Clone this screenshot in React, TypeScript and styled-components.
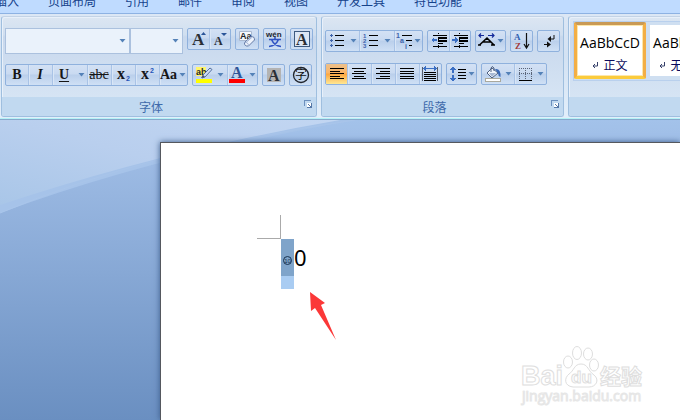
import React from "react";
import styled, { createGlobalStyle, css } from "styled-components";

const serif = `"Liberation Serif", serif`;
const sans = `"Liberation Sans", "Noto Sans CJK SC", sans-serif`;
const cjk = `"Noto Sans CJK SC", sans-serif`;
const ui = `"Open Sans", "Noto Sans CJK SC", sans-serif`;

const GlobalStyle = createGlobalStyle`
  *, *::before, *::after { box-sizing: border-box; }
  body { margin: 0; font-family: ${cjk}; }
  button, select { font: inherit; color: inherit; }
`;

const Window = styled.div`
  display: flex;
  flex-direction: column;
  min-height: 100vh;
  overflow: hidden;
`;

const TabBar = styled.nav`
  display: flex;
  align-items: flex-end;
  gap: 29px;
  height: 14px;
  margin-left: -5px;
  padding-bottom: 6px;
  overflow: hidden;
  background: #bfdbff;
  border-bottom: 1px solid #8db2e3;
`;

const Tab = styled.button`
  flex: none;
  padding: 0;
  border: 0;
  background: none;
  color: #15428b;
  font-size: 12px;
  line-height: 12px;
`;

const Ribbon = styled.div`
  display: flex;
  gap: 4px;
  padding: 2px 0 1px 1px;
  background: linear-gradient(#dce7f5, #d3e2f3 40%, #e2eefa);
  border-bottom: 1px solid #b4f2f6;
`;

const Group = styled.section<{ $grow?: boolean }>`
  display: flex;
  flex-direction: column;
  flex: ${(p) => (p.$grow ? "1 0 0" : "none")};
  min-width: 0;
  border: 1px solid #9fbfdf;
  border-top-color: #c3d3e6;
  border-radius: 3px;
  background: linear-gradient(#dce6f2, #d0dff0 18%, #c8d8ed 20%, #dae8f6);
  box-shadow: inset 1px 1px 0 #e8f0fa;
  overflow: hidden;
  ${(p) => p.$grow && css`
    border-right: 0;
    border-radius: 3px 0 0 3px;
  `}
`;

const GroupBody = styled.div<{ $top: number; $gap: number; $flush?: boolean }>`
  display: flex;
  flex-direction: column;
  gap: ${(p) => p.$gap}px;
  min-height: 80px;
  padding: ${(p) => p.$top}px ${(p) => (p.$flush ? 0 : 3)}px 0 3px;
`;

const Row = styled.div`
  display: flex;
  align-items: flex-start;
  gap: 4px;
`;

const GroupFooter = styled.footer`
  display: flex;
  align-items: center;
  height: 19px;
  background: #c1d9f0;
  color: #3e6aaa;
  font-size: 12px;
  line-height: 16px;
`;

const GroupTitle = styled.span`
  flex: 1;
  text-align: center;
`;

const Launcher = styled.button`
  display: flex;
  width: 16px;
  padding: 0 0 4px 4px;
  border: 0;
  background: none;
`;

const Combos = styled.div`
  display: flex;
`;

const ComboBox = styled.label<{ $width: number }>`
  display: flex;
  align-items: center;
  width: ${(p) => p.$width}px;
  height: 26px;
  padding-right: 3px;
  background: #eaf2fb;
  border: 1px solid #abc1de;
`;

const ComboSelect = styled.select`
  flex: 1;
  min-width: 0;
  height: 24px;
  border: 0;
  appearance: none;
  background: none;
  font-size: 12px;
`;

const ButtonGroup = styled.div`
  display: flex;
  height: 22px;
  border: 1px solid #8fb1dd;
  border-radius: 2px;
  background: linear-gradient(#d3e1f4, #c9daf1 45%, #bacfeb 50%, #cfe0f5);
  overflow: hidden;
`;

const ToolButton = styled.button<{ $width: number; $divided?: boolean; $active?: boolean }>`
  display: flex;
  align-items: center;
  justify-content: center;
  width: ${(p) => p.$width}px;
  height: 20px;
  padding: 0;
  border: 0;
  background: none;
  color: #161616;
  overflow: hidden;
  ${(p) => p.$divided && css`box-shadow: inset 1px 0 0 #a9c3e6, inset 2px 0 0 #d9e6f6;`}
  ${(p) => p.$active && css`background: linear-gradient(#ecc08c, #fcb565 45%, #fba63f 50%, #ffe793);`}
`;

const Letter = styled.span<{ $italic?: boolean; $line?: string; $light?: boolean }>`
  font-family: ${serif};
  font-size: 14px;
  line-height: 18px;
  font-weight: ${(p) => (p.$light ? "normal" : "bold")};
  font-style: ${(p) => (p.$italic ? "italic" : "normal")};
  text-decoration: ${(p) => p.$line ?? "none"};
  text-underline-offset: 2px;
`;

const Gallery = styled.div`
  display: flex;
  gap: 1px;
  height: 60px;
  margin-left: 1px;
  border: 1px solid #b9d0ed;
  border-right: 0;
  background: #cfdff1;
  overflow: hidden;
`;

const StyleCard = styled.button<{ $selected?: boolean }>`
  display: flex;
  flex: none;
  flex-direction: column;
  align-items: center;
  gap: 4px;
  width: 72px;
  height: 57px;
  padding: 8px 0 0;
  border: 3px solid transparent;
  border-radius: 2px;
  background: #fff;
  background-clip: padding-box;
  color: #000;
  ${(p) => p.$selected && css`
    border-color: #c99a55 #f3ae45 #fbcb3c #f3ae45;
    box-shadow: inset 0 0 0 1px #fde7ab;
  `}
`;

const Sample = styled.span`
  font-family: ${ui};
  font-size: 14px;
  line-height: 20px;
  white-space: nowrap;
`;

const StyleName = styled.span`
  display: flex;
  align-items: center;
  gap: 4px;
  color: #0b0b5c;
  font-size: 12px;
  line-height: 16px;
`;

const Workspace = styled.main`
  position: relative;
  display: flex;
  flex: 1;
  padding: 22px 0 0 160px;
  border-top: 1px solid #86a8cb;
  background: linear-gradient(#a3c2ea, #9dbbe4 14%, #6a8fc1);
  overflow: hidden;
`;

const Swoosh = styled.svg`
  position: absolute;
  top: 0;
  left: 0;
`;

const Page = styled.article`
  position: relative;
  flex: 1;
  padding: 72px 0 0 96px;
  border: 1px solid #55585e;
  border-width: 1px 0 0 1px;
  background: #fff;
  box-shadow: 0 0 6px #3a5a88;
`;

const MarginCorner = styled.div`
  width: 24px;
  height: 24px;
  border: 1px solid #aaa;
  border-width: 0 1px 1px 0;
`;

const Paragraph = styled.div`
  display: flex;
  margin-left: 24px;
`;

const Selection = styled.div`
  width: 13px;
  height: 50px;
  padding-top: 12px;
  background: linear-gradient(#7fa4ca 37px, #a9ccf2 37px);
`;

const BodyText = styled.span`
  font-family: "Noto Sans", sans-serif;
  font-size: 22px;
  line-height: 36px;
  color: #000;
`;

const Pointer = styled.svg`
  position: absolute;
  top: 148px;
  left: 148px;
`;

const Watermark = styled.svg`
  position: absolute;
  right: 30px;
  bottom: 10px;
`;

const Drop = () => (
  <svg width="7" height="4" viewBox="0 0 7 4" aria-hidden="true">
    <path d="M0.5 0H6.5L3.5 3.6Z" fill="#5482b8" />
  </svg>
);

type IconProps = { w?: number; smooth?: boolean; children: React.ReactNode };
const Icon = ({ w = 22, smooth, children }: IconProps) => (
  <svg width={w} height="20" viewBox={`0 0 ${w} 20`} shapeRendering={smooth ? "auto" : "crispEdges"} aria-hidden="true">
    {children}
  </svg>
);

const Lines = ({ rows, color = "#000" }: { rows: number[][]; color?: string }) => (
  <>
    {rows.map(([x, y, w], i) => (
      <rect key={i} x={x} y={y} width={w} height="1" fill={color} />
    ))}
  </>
);

type ToolProps = {
  name: string;
  w: number;
  first?: boolean;
  active?: boolean;
  arrow?: number;
  children: React.ReactNode;
};
const Tool = ({ name, w, first, active, arrow, children }: ToolProps) => (
  <>
    <ToolButton type="button" title={name} aria-label={name} $width={w} $divided={!first} $active={active}>
      {children}
    </ToolButton>
    {arrow && (
      <ToolButton type="button" aria-label={`${name} ▾`} $width={arrow}>
        <Drop />
      </ToolButton>
    )}
  </>
);

const Footer = ({ title }: { title: string }) => (
  <GroupFooter>
    <GroupTitle>{title}</GroupTitle>
    <Launcher type="button" aria-label={title}>
      <svg width="9" height="9" viewBox="0 0 9 9" aria-hidden="true" shapeRendering="crispEdges">
        <path d="M0 6V0H7V1H1V6Z" fill="#6b8fbd" />
        <path d="M3 3H8V8H3Z" fill="#fff" />
        <path d="M4 4H5V5H6V6H7V3H8V8H3V7H6V6H5V5H4Z" fill="#5578a8" />
      </svg>
    </Launcher>
  </GroupFooter>
);

const FontGroup = () => (
  <Group>
    <GroupBody $top={11} $gap={10}>
      <Row>
        <Combos>
          <ComboBox $width={125}>
            <ComboSelect aria-label="字体"><option /></ComboSelect>
            <Drop />
          </ComboBox>
          <ComboBox $width={53}>
            <ComboSelect aria-label="字号"><option /></ComboSelect>
            <Drop />
          </ComboBox>
        </Combos>
        <ButtonGroup>
          <Tool name="增大字体" w={21} first>
            <Icon w={21} smooth>
              <text x="4" y="16" fontFamily={serif} fontWeight="bold" fontSize="17" fill="#2b2f36">A</text>
              <path d="M13 6L15.5 3L18 6Z" fill="#2a5599" />
            </Icon>
          </Tool>
          <Tool name="缩小字体" w={21}>
            <Icon w={21} smooth>
              <text x="5" y="16" fontFamily={serif} fontWeight="bold" fontSize="12" fill="#2b2f36">A</text>
              <path d="M12 4H18L15 7Z" fill="#2a5599" />
            </Icon>
          </Tool>
        </ButtonGroup>
        <ButtonGroup>
          <Tool name="清除格式" w={22} first>
            <Icon w={22} smooth>
              <path d="M3.5 2.5H15.5V11.5H3.5Z" fill="#f5f8fd" stroke="#a9b8d0" />
              <text x="4" y="10" fontFamily={sans} fontWeight="bold" fontSize="9" fill="#20242c">Aa</text>
              <path d="M15 7.500Q18.500 7 18.500 11L12.500 17Q8 17.500 8.500 13.500Z" fill="#eef3fc" stroke="#647aa5" />
              <path d="M8.500 13.500Q12.500 13 12.500 17M10.500 13L17 7.500" fill="none" stroke="#9db0d2" />
            </Icon>
          </Tool>
        </ButtonGroup>
        <ButtonGroup>
          <Tool name="拼音指南" w={21} first>
            <Icon w={21} smooth>
              <text x="2" y="8" fontFamily={sans} fontWeight="bold" fontSize="8" fill="#22262e">wén</text>
              <path d="M5 10.500H17M11 8V10.500M7.500 10.500C9 14 12 17 17 17.500M14.500 10.500C13 14 10 17 5 17.500" fill="none" stroke="#3154c4" strokeWidth="1.6" />
            </Icon>
          </Tool>
        </ButtonGroup>
        <ButtonGroup>
          <Tool name="字符边框" w={21} first>
            <Icon w={21} smooth>
              <rect x="3.5" y="2.5" width="15" height="15" fill="#dbe6f5" stroke="#3d5a80" />
              <text x="5" y="16" fontFamily={serif} fontWeight="bold" fontSize="16" fill="#2b2f36">A</text>
            </Icon>
          </Tool>
        </ButtonGroup>
      </Row>
      <Row>
        <ButtonGroup>
          <Tool name="加粗" w={22} first><Letter>B</Letter></Tool>
          <Tool name="倾斜" w={24}><Letter $italic>I</Letter></Tool>
          <Tool name="下划线" w={24} arrow={11}><Letter $line="underline">U</Letter></Tool>
          <Tool name="删除线" w={24}><Letter $light $line="line-through">abc</Letter></Tool>
          <Tool name="下标" w={24}>
            <Icon w={24} smooth>
              <text x="6" y="14" fontFamily={serif} fontWeight="bold" fontSize="16" fill="#15171b">x</text>
              <text x="15" y="16" fontFamily={sans} fontWeight="bold" fontSize="7" fill="#2554b8">2</text>
            </Icon>
          </Tool>
          <Tool name="上标" w={24}>
            <Icon w={24} smooth>
              <text x="6" y="14" fontFamily={serif} fontWeight="bold" fontSize="16" fill="#15171b">x</text>
              <text x="15" y="8" fontFamily={sans} fontWeight="bold" fontSize="7" fill="#2554b8">2</text>
            </Icon>
          </Tool>
          <Tool name="更改大小写" w={19} arrow={9}><Letter>Aa</Letter></Tool>
        </ButtonGroup>
        <ButtonGroup>
          <Tool name="突出显示" w={21} first arrow={13}>
            <Icon w={21} smooth>
              <rect x="3" y="2" width="10" height="9" fill="#fff56b" />
              <text x="3" y="10" fontFamily={sans} fontSize="9" fontWeight="bold" fill="#22262e">ab</text>
              <path d="M17 3L19 4.500L12 12L9 13L10 10Z" fill="#cfdcf2" stroke="#53709f" />
              <path d="M8 13L10 10L12 12Z" fill="#4c566b" />
              <rect x="3" y="14" width="16" height="4" fill="#ffff00" />
            </Icon>
          </Tool>
          <Tool name="字体颜色" w={20} arrow={10}>
            <Icon w={20} smooth>
              <text x="4" y="13" fontFamily={serif} fontWeight="bold" fontSize="16" fill="#2f5597">A</text>
              <rect x="2" y="14" width="16" height="4" fill="#ff0000" />
            </Icon>
          </Tool>
        </ButtonGroup>
        <ButtonGroup>
          <Tool name="字符底纹" w={21} first>
            <Icon w={21} smooth>
              <rect x="4" y="3" width="14" height="14" fill="#b3b3b3" />
              <text x="5" y="16" fontFamily={serif} fontWeight="bold" fontSize="16" fill="#2b2f36">A</text>
            </Icon>
          </Tool>
        </ButtonGroup>
        <ButtonGroup>
          <Tool name="带圈字符" w={21} first>
            <Icon w={21} smooth>
              <circle cx="11" cy="10" r="7.500" fill="none" stroke="#20242c" strokeWidth="1.300" />
              <text x="5" y="14" fontFamily={cjk} fontSize="12" fill="#111">字</text>
            </Icon>
          </Tool>
        </ButtonGroup>
      </Row>
    </GroupBody>
    <Footer title="字体" />
  </Group>
);

const indentRows = [[5, 4, 14], [10, 6, 9], [10, 7, 9], [10, 9, 9], [10, 10, 9], [10, 12, 5], [5, 15, 14]];

const ParagraphGroup = () => (
  <Group>
    <GroupBody $top={13} $gap={11}>
      <Row>
        <ButtonGroup>
          <Tool name="项目符号" w={21} first arrow={12}>
            <Icon w={21}>
              {[4, 9, 14].map((y) => (
                <path key={y} d={`M5 ${y - 1}H6V${y}H7V${y + 1}H6V${y + 2}H5V${y + 1}H4V${y}H5Z`} fill="#3c62ab" />
              ))}
              <Lines rows={[[9, 4, 9], [9, 9, 9], [9, 14, 9]]} />
            </Icon>
          </Tool>
          <Tool name="编号" w={22} arrow={13}>
            <Icon w={22} smooth>
              <g fontFamily={sans} fontWeight="bold" fontSize="6" fill="#3c62ab">
                <text x="4" y="7">1</text>
                <text x="4" y="12">2</text>
                <text x="4" y="17">3</text>
              </g>
              <Lines rows={[[10, 4, 9], [10, 9, 9], [10, 14, 9]]} />
            </Icon>
          </Tool>
          <Tool name="多级列表" w={19} arrow={9}>
            <Icon w={19} smooth>
              <g fontFamily={sans} fontWeight="bold" fontSize="7" fill="#3c62ab">
                <text x="2" y="7">1</text>
                <text x="6" y="12">a</text>
                <text x="11" y="18">i</text>
              </g>
              <Lines rows={[[8, 4, 10], [12, 9, 6], [15, 14, 3]]} />
            </Icon>
          </Tool>
        </ButtonGroup>
        <ButtonGroup>
          <Tool name="减少缩进" w={21} first>
            <Icon w={21}>
              <path d="M10.500 2V18" stroke="#000" strokeDasharray="1 1" />
              <Lines rows={indentRows} />
              <path d="M3 9L6 6V8H9V10H6V12Z" fill="#3b6fc4" />
            </Icon>
          </Tool>
          <Tool name="增加缩进" w={21}>
            <Icon w={21}>
              <path d="M10.500 2V18" stroke="#000" strokeDasharray="1 1" />
              <Lines rows={indentRows} />
              <path d="M9 9L6 6V8H3V10H6V12Z" fill="#3b6fc4" />
            </Icon>
          </Tool>
        </ButtonGroup>
        <ButtonGroup>
          <Tool name="中文版式" w={19} first arrow={10}>
            <Icon w={19} smooth>
              <path d="M2 14H5M3.500 14L11 7L18 14M15 14H19M7.500 11H15" fill="none" stroke="#000" strokeWidth="1.600" />
              <path d="M3 4.500H8M5 2.500L3 4.500L5 6.500M12 4.500H18M16 2.500L18 4.500L16 6.500" fill="none" stroke="#142a9a" strokeWidth="1.200" />
            </Icon>
          </Tool>
        </ButtonGroup>
        <ButtonGroup>
          <Tool name="排序" w={21} first>
            <Icon w={21} smooth>
              <text x="3" y="9" fontFamily={serif} fontWeight="bold" fontSize="9" fill="#2f5fb0">A</text>
              <text x="4" y="18" fontFamily={serif} fontWeight="bold" fontSize="9" fill="#a33b3b">Z</text>
              <path d="M15.500 2V16M13 13L15.500 17L18 13" fill="none" stroke="#111" strokeWidth="1.200" />
            </Icon>
          </Tool>
        </ButtonGroup>
        <ButtonGroup>
          <Tool name="显示编辑标记" w={21} first>
            <Icon w={21} smooth>
              <path d="M16 4V8H11" fill="none" stroke="#111" />
              <path d="M9.500 8L13 5V11Z" fill="#111" />
              <path d="M6 13.500H10" fill="none" stroke="#111" />
              <path d="M13 13.500L9 10.500V16.500Z" fill="#111" />
            </Icon>
          </Tool>
        </ButtonGroup>
      </Row>
      <Row>
        <ButtonGroup>
          <Tool name="左对齐" w={21} first active>
            <Icon w={21}><Lines rows={[[4, 4, 14], [4, 7, 10], [4, 9, 14], [4, 12, 10], [4, 14, 14]]} /></Icon>
          </Tool>
          <Tool name="居中" w={24}>
            <Icon w={24}><Lines rows={[[5, 4, 14], [7, 7, 10], [5, 9, 14], [7, 12, 10], [5, 14, 14]]} /></Icon>
          </Tool>
          <Tool name="右对齐" w={24}>
            <Icon w={24}><Lines rows={[[5, 4, 14], [9, 7, 10], [5, 9, 14], [9, 12, 10], [5, 14, 14]]} /></Icon>
          </Tool>
          <Tool name="两端对齐" w={24}>
            <Icon w={24}><Lines rows={[[5, 4, 14], [5, 7, 14], [5, 9, 14], [5, 12, 14], [5, 14, 14]]} /></Icon>
          </Tool>
          <Tool name="分散对齐" w={22}>
            <Icon w={22}>
              <path d="M3.500 3V17M18.500 3V17" stroke="#555d6b" />
              <path d="M4 4.500L7 2V4H15V2L18 4.500L15 7V5H7V7Z" fill="#3b6fc4" />
              <Lines rows={[[5, 8, 12], [5, 10, 12], [5, 12, 12], [5, 14, 12], [5, 16, 12]]} />
            </Icon>
          </Tool>
        </ButtonGroup>
        <ButtonGroup>
          <Tool name="行距" w={19} first arrow={10}>
            <Icon w={19}>
              <path d="M6 2L9 6H7V9H5V6H3ZM6 18L9 14H7V11H5V14H3Z" fill="#3b6fc4" />
              <Lines rows={[[11, 5, 8], [11, 8, 8], [11, 11, 8], [11, 14, 8]]} />
            </Icon>
          </Tool>
        </ButtonGroup>
        <ButtonGroup>
          <Tool name="底纹" w={20} first arrow={12}>
            <Icon w={20} smooth>
              <path d="M5 9L10 4L16 9L10 14Z" fill="#f2f6fc" stroke="#4d5f80" />
              <path d="M9 8V4Q10 1 12 4V7" fill="none" stroke="#4d5f80" />
              <path d="M7 9H14L10 13Z" fill="#a8b9d4" />
              <path d="M13 5Q19 4 18.500 13Q16 12 16 9Z" fill="#3767b5" />
              <rect x="3.500" y="14.500" width="15" height="3" fill="#fff" stroke="#aaa99d" />
            </Icon>
          </Tool>
          <Tool name="边框" w={20} arrow={12}>
            <Icon w={20}>
              <path d="M5.500 4V15M11.500 4V15M17.500 4V15M5 4.500H18M5 9.500H18" fill="none" stroke="#5a6478" strokeDasharray="1 1" />
              <rect x="5" y="16" width="13" height="1" fill="#000" />
            </Icon>
          </Tool>
        </ButtonGroup>
      </Row>
    </GroupBody>
    <Footer title="段落" />
  </Group>
);

const styleCards = [
  { sample: "AaBbCcD", name: "正文", selected: true },
  { sample: "AaBbCcD", name: "无间隔", selected: false },
];

const ReturnMark = () => (
  <svg width="7" height="7" viewBox="0 0 7 7" aria-hidden="true">
    <path d="M5.500 0V4H1M3 2L1 4L3 6" fill="none" stroke="#35406a" />
  </svg>
);

const StylesGroup = () => (
  <Group $grow>
    <GroupBody $top={4} $gap={0} $flush>
      <Gallery>
        {styleCards.map((c) => (
          <StyleCard key={c.name} type="button" $selected={c.selected}>
            <Sample>{c.sample}</Sample>
            <StyleName><ReturnMark />{c.name}</StyleName>
          </StyleCard>
        ))}
      </Gallery>
    </GroupBody>
    <GroupFooter />
  </Group>
);

const tabs = ["插入", "页面布局", "引用", "邮件", "审阅", "视图", "开发工具", "特色功能"];

export default function App() {
  return (
    <Window>
      <GlobalStyle />
      <TabBar>
        {tabs.map((t) => <Tab key={t} type="button">{t}</Tab>)}
      </TabBar>
      <Ribbon>
        <FontGroup />
        <ParagraphGroup />
        <StylesGroup />
      </Ribbon>
      <Workspace>
        <Swoosh width="400" height="100" viewBox="0 0 400 100" aria-hidden="true">
          <defs>
            <linearGradient id="glow" x1="1" y1="0" x2="0" y2="1">
              <stop offset="0" stopColor="#c2d6f2" />
              <stop offset="0.5" stopColor="#b9cfee" />
              <stop offset="1" stopColor="#a9c6e8" />
            </linearGradient>
          </defs>
          <path d="M0 0H355Q150 37 0 93Z" fill="#a6c3e9" />
          <path d="M0 93Q150 30 355 0" fill="none" stroke="#a9c5ea" />
          <path d="M0 0H340Q165 30 0 85Z" fill="url(#glow)" />
        </Swoosh>
        <Page>
          <MarginCorner />
          <Paragraph>
            <Selection>
              <svg width="13" height="20" viewBox="0 0 13 20" aria-hidden="true">
                <circle cx="6.500" cy="9.500" r="4" fill="none" stroke="#173250" />
                <text x="6.500" y="12" textAnchor="middle" fontFamily={sans} fontSize="6" fill="#173250">10</text>
              </svg>
            </Selection>
            <BodyText>0</BodyText>
          </Paragraph>
          <Pointer width="30" height="52" viewBox="0 0 30 52" aria-hidden="true">
            <path d="M1 1L16 12L12 14L27 49L6 17L2 20Z" fill="#fb3838" />
          </Pointer>
          <Watermark width="130" height="66" viewBox="0 0 130 66" role="img" aria-label="Baidu 经验">
            <g fill="#fff" stroke="#dedede" strokeWidth="1">
              <text x="1" y="41" fontFamily={sans} fontWeight="bold" fontSize="27">Bai</text>
              <ellipse cx="48" cy="18" rx="4.500" ry="6" />
              <ellipse cx="57" cy="9" rx="4.500" ry="6.500" />
              <ellipse cx="68" cy="10" rx="4.500" ry="6" />
              <ellipse cx="74" cy="21" rx="4.500" ry="6" />
              <path d="M61 20C68 20 68 27 74 31C80 36 76 43 69 43H53C44 42 44 34 49 30C54 27 54 20 61 20Z" />
              <text x="51" y="39" fontFamily={sans} fontWeight="bold" fontSize="17">du</text>
              <text x="80" y="40" fontFamily={cjk} fontWeight="bold" fontSize="21">经验</text>
              <text x="2" y="57" fontFamily={ui} fontSize="14" stroke="#e6e6e6">jingyan.baidu.com</text>
            </g>
          </Watermark>
        </Page>
      </Workspace>
    </Window>
  );
}
